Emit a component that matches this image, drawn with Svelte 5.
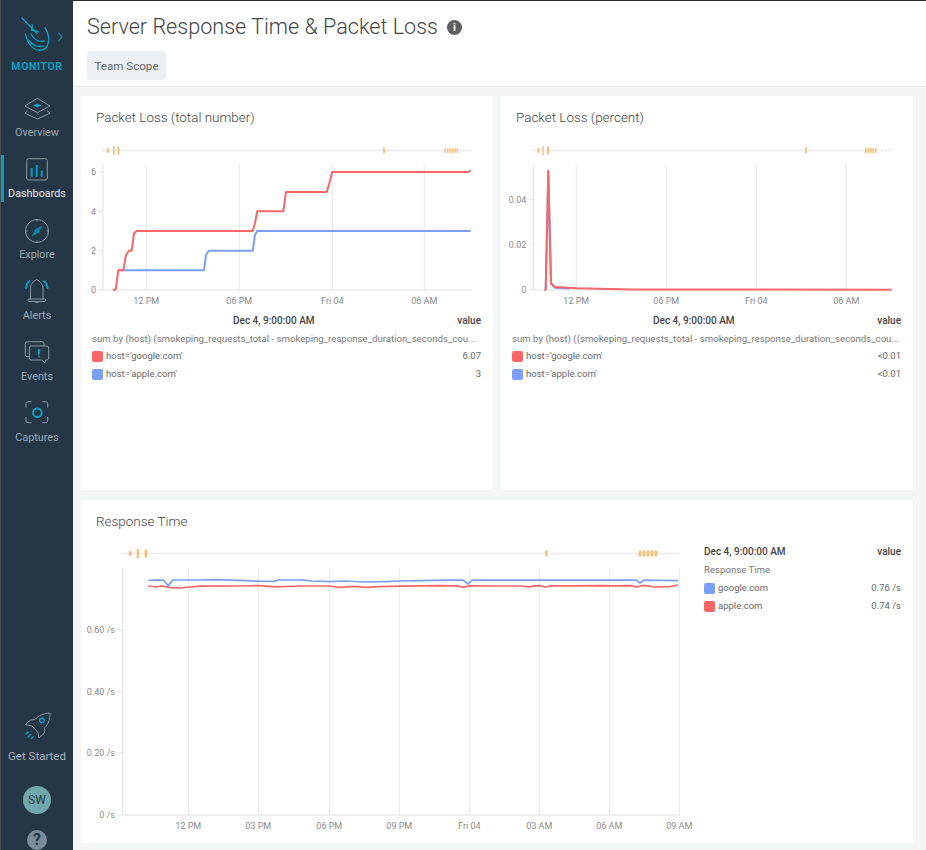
<script>
	// plot geometry is read off the screen, so series are in page px and shifted by the group transform
	const RED = '#f76767';
	const BLUE = '#7a9ff5';

	const navItems = ['Overview', 'Dashboards', 'Explore', 'Alerts', 'Events', 'Captures'];

	const toPoints = (pts) => pts.map(([x, y]) => `${x},${y}`).join(' ');

	const ticks = (spans) => spans.map(([x, w, h]) => ({ x, w, h }));

	const lossRed = [[113,289.7],[115.7,289.7],[118.3,270.3],[123.3,270.3],[126,255],[129,250.7],[131.7,250.7],[134,233.3],[136.7,231],[252.7,231],[255,223.3],[257.3,211.3],[283.3,211.3],[286,192],[326.7,192],[329.3,183.3],[332.3,172],[468.3,172],[470.7,170.7]];
	const lossBlue = [[118.3,270.3],[204,270.3],[206,255],[208.7,250.7],[252.7,250.7],[255,235],[257.3,231],[470.7,231]];
	const pctRed = [[544.3,289.7],[545.7,289.7],[548.3,171.5],[551,283.3],[555,287],[576.7,288.3],[633,289.4],[891.7,289.7]];
	// blue sits under the red, only its tip and the start of the tail show
	const pctBlue = [[545.7,289.7],[548.3,170.5],[551,283.3],[555,287.8],[570,288.6]];

	const rtBlue = [[148.3,580.3],[160,580],[164,580.4],[168.3,586],[172.7,580],[200,580],[216,579.6],[240,580.4],[258,581.2],[274,581.4],[278,580],[300,580],[302,579.8],[312,581],[330,581.6],[345,581],[365,582],[385,581.6],[400,581],[420,580.6],[445,580.2],[463,580.2],[468.3,584],[472,580.2],[520,580.2],[560,580.2],[600,580.2],[636,580],[640,583],[644,580.2],[678,580.6]];
	const rtRed = [[148.3,586],[156,587],[162,586],[170,587.6],[180,588],[190,587],[200,586.2],[240,586],[258,585.6],[277,586.8],[300,586],[329,586],[340,587.4],[355,586.4],[365,587.4],[380,586.6],[400,586.2],[440,585.6],[456,585.8],[463,587.2],[470,585.8],[500,586],[520,586],[530,586.8],[535,585.8],[540,585.6],[545,587],[552,585.8],[570,585.8],[600,585.6],[612,585.8],[632,585.6],[636,587],[644,585.4],[654,587],[670,586.6],[678,585]];

	const lossTicks = ticks([[107,2,5],[113,1.6,9],[117.5,2,8],[383,2,6],[444.5,1.4,5],[447,1.4,5],[449.5,1.4,5],[452,1.4,5],[454.5,1.4,5],[456.5,1.4,5]]);
	const pctTicks = ticks([[537.5,1.6,5],[542.5,1.4,9],[547,2.2,8],[805,1.8,6],[865,1.6,5],[867.5,1.6,5],[870,1.6,5],[872.5,1.6,5],[875,1.6,5]]);
	const rtTicks = ticks([[129,2.6,5],[136.7,2.6,9],[144.7,2.6,8],[545.3,2.6,6],[638.7,2.8,6],[642.6,2.8,6],[646.5,2.8,6],[650.4,2.8,6],[654.5,2.8,6]]);

	const smallCharts = [
		{
			id: 'loss',
			title: 'Packet Loss (total number)',
			dx: 81,
			left: 103,
			right: 472,
			ticks: lossTicks,
			grid: [[146.3, '12 PM'], [239.3, '06 PM'], [332.3, 'Fri 04'], [424.3, '06 AM']],
			yLabels: [[289.7, '0'], [250.7, '2'], [211.3, '4'], [172, '6']],
			series: [[lossBlue, BLUE], [lossRed, RED]],
			query: 'sum by (host) (smokeping_requests_total - smokeping_response_duration_seconds_cou...',
			rows: [["host='google.com'", RED, '6.07'], ["host='apple.com'", BLUE, '3']]
		},
		{
			id: 'pct',
			title: 'Packet Loss (percent)',
			dx: 501,
			left: 533.3,
			right: 892,
			ticks: pctTicks,
			grid: [[576.3, '12 PM'], [666.3, '06 PM'], [756.3, 'Fri 04'], [846.3, '06 AM']],
			yLabels: [[289.7, '0'], [244.3, '0.02'], [199.3, '0.04']],
			series: [[pctBlue, BLUE], [pctRed, RED]],
			query: 'sum by (host) ((smokeping_requests_total - smokeping_response_duration_seconds_cou...',
			rows: [["host='google.com'", RED, '<0.01'], ["host='apple.com'", BLUE, '<0.01']]
		}
	];

	const rtGrid = [[188.3, '12 PM'], [258.3, '03 PM'], [329.3, '06 PM'], [399.3, '09 PM'], [469.3, 'Fri 04'], [539.3, '03 AM'], [609.3, '06 AM'], [679.3, '09 AM']];
	const rtY = [[815, '0 /s'], [753, '0.20 /s'], [692, '0.40 /s'], [630, '0.60 /s']];
</script>

<div class="page">
	<aside class="sidebar">
		<div class="logo">
			<svg width="72" height="60" viewBox="0 0 72 60" fill="none" stroke="#0a9fc0" stroke-width="1.4" stroke-linecap="round" stroke-linejoin="round">
				<path d="M21 18 L36 33.5" />
				<path d="M31.5 25 L30.5 30 L37 31.5" />
				<path d="M44 28 C48 33 49 41 46 46.5 C43 51 37 51 33 48.500 C28.500 45.500 25.500 40 24.500 34" />
				<path d="M27.500 40 C31 45 37 47.500 42 46" />
				<path d="M30 34 C33 39.500 38 42.500 43 41" />
				<path d="M57.5 33 L61 37 L57.5 41" stroke="#157c98" />
			</svg>
			<span class="logo-text">MONITOR</span>
		</div>
		<nav class="nav">
			{#each navItems as item}
				<div class="nav-item" class:active={item === 'Dashboards'}>
					<svg width="36" height="36" viewBox="0 0 36 36" fill="none" stroke="#8b98a3" stroke-width="1" stroke-linejoin="round">
						{#if item === 'Overview'}
							<path d="M18.3 7.3 L31 15 L18.3 21.7 L6 15 Z" />
							<path d="M8.5 19.7 L6 22.3 L18.3 28 L31 22.3 L28 19.7" />
							<path d="M18.3 12.5 L22.3 14.5 L18.3 16.5 L14.3 14.5 Z" fill="#0a9fc0" stroke="none" />
						{:else if item === 'Dashboards'}
							<rect x="7.7" y="6.7" width="20.6" height="21.3" rx="2" />
							<path d="M12.7 24.7 V16 M17.7 24.7 V13 M22.7 24.7 V18.7" stroke="#0a9fc0" stroke-width="2" />
						{:else if item === 'Explore'}
							<circle cx="18" cy="18" r="11.5" />
							<path d="M18 6.5 V8.5 M18 27.5 V29.5 M6.5 18 H8.5 M27.5 18 H29.5" />
							<path d="M23.5 12.5 L19.8 19.8 L12.5 23.5 L16.2 16.2 Z" fill="#0a86a6" stroke="none" />
						{:else if item === 'Alerts'}
							<path d="M11.5 25 V15 C11.5 10.5 14 7.5 17.7 5.5 C21.5 7.5 24 10.5 24 15 V25" />
							<rect x="9" y="25" width="17.5" height="2.5" rx="1" />
							<path d="M15.5 27.5 A2.5 2.5 0 0 0 20 27.5" />
							<path d="M7 14 C7.2 11 8.5 8.5 10.5 7 M28.5 14 C28.3 11 27 8.5 25 7" stroke="#0a9fc0" stroke-width="1.8" stroke-linecap="round" />
						{:else if item === 'Events'}
							<path d="M10 21.7 H8.3 Q6.3 21.7 6.3 19.7 V8.7 Q6.3 6.7 8.3 6.7 H23 Q25 6.7 25 8.7 V11" />
							<path d="M12.3 11 H27.7 Q29.7 11 29.7 13 V23 Q29.7 25 27.7 25 H26.5 L26 27.7 L22.5 25 H12.3 Q10.3 25 10.3 23 V13 Q10.3 11 12.3 11 Z" />
							<path d="M18.7 14.3 H21.3 L20.8 19.7 H19.2 Z M19.2 20.5 H20.8 V22.2 H19.2 Z" fill="#0a9fc0" stroke="none" />
						{:else if item === 'Captures'}
							<path d="M7 11.5 V7.7 Q7 5.7 9 5.7 H12.5 M23.2 5.7 H26.7 Q28.7 5.7 28.7 7.7 V11.5 M28.7 21 V24.7 Q28.7 26.7 26.7 26.7 H23.2 M12.5 26.7 H9 Q7 26.7 7 24.7 V21" />
							<circle cx="18.3" cy="16.7" r="4.3" stroke="#0a9fc0" stroke-width="2" />
						{/if}
					</svg>
					<span>{item}</span>
				</div>
			{/each}
		</nav>
		<div class="side-bottom">
			<div class="nav-item started">
				<svg width="36" height="36" viewBox="0 0 36 36" fill="none" stroke="#8b98a3" stroke-width="1" stroke-linejoin="round">
					<path d="M31 5 C24 5.5 19.5 7.5 16 11.5 L11.5 12 L6.5 16.5 L13 18 L19 24.5 L20 30 L25 25.5 C26 23 26 21.5 25.5 20 C29.5 16 31 11 31 5 Z" />
					<circle cx="23" cy="12.5" r="2.3" stroke="#0a9fc0" stroke-width="1.3" />
					<path d="M9.5 23.5 L6.5 26.5 M12 26 L8.5 29.5 M14.5 28.5 L12 31" stroke="#0a9fc0" stroke-width="1.3" />
				</svg>
				<span>Get Started</span>
			</div>
			<div class="avatar">SW</div>
			<div class="help">?</div>
		</div>
	</aside>

	<main class="main">
		<header class="header">
			<div class="title-row">
				<h1>Server Response Time &amp; Packet Loss</h1>
				<span class="info">i</span>
			</div>
			<button class="scope">Team Scope</button>
		</header>

		<div class="cards">
			{#each smallCharts as c}
				<section class="card">
					<h2>{c.title}</h2>
					<svg class="plot" width="412" height="178" viewBox="0 0 412 178">
						<g transform="translate({-c.dx} -142)">
							<line x1={c.left - 1} x2={c.right} y1="150.5" y2="150.5" class="anno-line" />
							{#each c.ticks as t}
								<rect x={t.x} width={t.w} y={150.5 - t.h / 2} height={t.h} fill="#fbbf7c" />
							{/each}
							{#each c.grid as [x, label]}
								<line x1={x} x2={x} y1="164" y2="290" class="grid" />
								<text x={x} y="304" text-anchor="middle" class="tick">{label}</text>
							{/each}
							<line x1={c.left} x2={c.left} y1="165" y2="290" class="axis" />
							<line x1={c.left} x2={c.right} y1="290" y2="290" class="axis" />
							{#each c.yLabels as [y, label]}
								<line x1={c.left - 4} x2={c.left} y1={y} y2={y} class="axis" />
								<text x={c.left - 7} y={y + 3.2} text-anchor="end" class="tick">{label}</text>
							{/each}
							{#each c.series as [pts, color]}
								<polyline points={toPoints(pts)} stroke={color} class="line" />
							{/each}
						</g>
					</svg>
					<div class="legend small">
						<div class="legend-head">
							<span class="stamp">Dec 4, 9:00:00 AM</span>
							<b>value</b>
						</div>
						<div class="query">{c.query}</div>
						{#each c.rows as [name, color, value]}
							<div class="row">
								<span class="swatch" style="background: {color}"></span>
								<span class="name">{name}</span>
								<span class="val">{value}</span>
							</div>
						{/each}
					</div>
				</section>
			{/each}

			<section class="card wide">
				<h2>Response Time</h2>
				<div class="wide-body">
					<svg class="plot" width="622" height="295" viewBox="0 0 622 295">
						<g transform="translate(-81 -545)">
							<line x1="122" x2="680" y1="553.5" y2="553.5" class="anno-line" />
							{#each rtTicks as t}
								<rect x={t.x} width={t.w} y={553.5 - t.h / 2} height={t.h} fill="#fbbf7c" />
							{/each}
							{#each rtGrid as [x, label]}
								<line x1={x} x2={x} y1="568" y2="815" class="grid" />
								<text x={x} y="829" text-anchor="middle" class="tick">{label}</text>
							{/each}
							<line x1="122.7" x2="122.7" y1="568" y2="815" class="axis" />
							<line x1="122.7" x2="680" y1="815" y2="815" class="axis" />
							{#each rtY as [y, label]}
								<line x1="118" x2="122.7" y1={y} y2={y} class="axis" />
								<text x="115" y={y + 3.2} text-anchor="end" class="tick">{label}</text>
							{/each}
							<polyline points={toPoints(rtRed)} stroke={RED} class="line thin" />
							<polyline points={toPoints(rtBlue)} stroke={BLUE} class="line thin" />
						</g>
					</svg>
					<div class="legend side">
						<div class="legend-head">
							<b>Dec 4, 9:00:00 AM</b>
							<b>value</b>
						</div>
						<div class="query">Response Time</div>
						<div class="row">
							<span class="swatch" style="background: {BLUE}"></span>
							<span class="name">google.com</span>
							<span class="val">0.76 /s</span>
						</div>
						<div class="row">
							<span class="swatch" style="background: {RED}"></span>
							<span class="name">apple.com</span>
							<span class="val">0.74 /s</span>
						</div>
					</div>
				</div>
			</section>
		</div>
	</main>
</div>

<style>
	:global(body) {
		margin: 0;
		overflow: hidden;
	}

	.page {
		display: flex;
		width: 926px;
		height: 850px;
		overflow: hidden;
		background: #f4f5f5;
		font-family: Roboto, 'Liberation Sans', sans-serif;
		color: #555;
	}

	/* sidebar */
	.sidebar {
		width: 72px;
		flex-shrink: 0;
		display: flex;
		flex-direction: column;
		background: #253746;
		border-left: 1px solid #4a4a4a;
		box-sizing: content-box;
	}

	.logo {
		height: 88px;
		display: flex;
		flex-direction: column;
		align-items: center;
	}

	.logo svg {
		display: block;
	}

	.logo-text {
		margin-top: 1px;
		font-size: 10.5px;
		line-height: 12px;
		font-weight: 700;
		letter-spacing: 0.6px;
		color: #0a9fc0;
	}

	.nav {
		display: flex;
		flex-direction: column;
		gap: 14px;
		margin-top: 3px;
	}

	.nav-item {
		position: relative;
		height: 47px;
		display: flex;
		flex-direction: column;
		align-items: center;
		font-size: 10.8px;
		line-height: 14px;
		color: #9aa7b1;
	}

	.nav-item svg {
		display: block;
		flex-shrink: 0;
	}

	.nav-item span {
		margin-top: -1px;
		white-space: nowrap;
	}

	.nav-item.active {
		color: #e6eaed;
	}

	.nav-item.active::before {
		content: '';
		position: absolute;
		left: 0;
		top: 3px;
		bottom: -3px;
		width: 3px;
		background: #0a9fc0;
	}

	.side-bottom {
		margin-top: auto;
		display: flex;
		flex-direction: column;
		align-items: center;
	}

	.nav-item.started {
		height: 54px;
		margin-bottom: 24px;
		font-size: 11.5px;
		color: #a9b4bd;
	}

	.nav-item.started span {
		margin-top: 5px;
	}

	.avatar {
		width: 28px;
		height: 28px;
		border-radius: 50%;
		background: #6fa8ad;
		color: #253746;
		font-size: 12px;
		line-height: 28px;
		text-align: center;
	}

	.help {
		width: 20px;
		height: 20px;
		margin-top: 16px;
		border-radius: 50%;
		background: #7b8b99;
		color: #253746;
		font-size: 16px;
		font-weight: 700;
		line-height: 20px;
		text-align: center;
	}

	/* main */
	.main {
		flex: 1;
		min-width: 0;
		display: flex;
		flex-direction: column;
	}

	.header {
		height: 87px;
		box-sizing: border-box;
		padding: 13px 14px 0;
		background: #fff;
		border-top: 1px solid #2c2c2c;
		border-bottom: 1px solid #e8e8e8;
	}

	.title-row {
		display: flex;
		align-items: center;
		gap: 9px;
	}

	h1 {
		margin: 0;
		font-size: 21.6px;
		line-height: 26px;
		font-weight: 300;
		color: #444;
	}

	.info {
		width: 15px;
		height: 15px;
		border-radius: 50%;
		background: #5f5f5f;
		color: #fff;
		font-size: 11px;
		font-weight: 700;
		line-height: 15px;
		text-align: center;
	}

	.scope {
		display: block;
		margin-top: 11px;
		height: 29px;
		width: 79px;
		padding: 0;
		border: 0;
		border-radius: 3px;
		background: #ecf0f3;
		color: #666;
		font: 400 11.6px Roboto, sans-serif;
	}

	.cards {
		display: grid;
		grid-template-columns: 412px 412px;
		grid-template-rows: 394px 343px;
		gap: 10px 8px;
		margin: 9px 0 0 8px;
	}

	.card {
		background: #fff;
		min-width: 0;
	}

	.card.wide {
		grid-column: 1 / 3;
	}

	h2 {
		margin: 0;
		padding: 14px 15px 0;
		height: 32px;
		box-sizing: border-box;
		font-size: 13.45px;
		line-height: 16px;
		font-weight: 300;
		color: #444;
	}

	.plot {
		display: block;
		margin-top: 14px;
	}

	.wide .plot {
		margin-top: 13px;
	}

	.anno-line {
		stroke: #e6e6e6;
		stroke-width: 1.5;
		stroke-dasharray: 3 1;
	}

	.grid {
		stroke: #e8e8e8;
		stroke-width: 1;
	}

	.axis {
		stroke: #e0e0e0;
		stroke-width: 1;
	}

	.tick {
		font-size: 9px;
		fill: #8a8a8a;
	}

	.line {
		fill: none;
		stroke-width: 2;
		stroke-linejoin: round;
	}

	.line.thin {
		stroke-width: 1.7;
	}

	.legend {
		font-size: 9.5px;
		color: #666;
	}

	.legend.small {
		margin-top: -6px;
		padding: 0 12px 0 11px;
	}

	.legend-head {
		display: flex;
		justify-content: space-between;
		height: 14px;
		font-size: 10px;
		line-height: 14px;
		color: #444;
	}

	.legend-head b,
	.stamp {
		font-weight: 500;
	}

	.legend.small .stamp {
		margin-left: 141px;
	}

	.query {
		margin-top: 4px;
		height: 14px;
		font-size: 9.65px;
		line-height: 14px;
		color: #777;
		white-space: nowrap;
	}

	.row {
		display: flex;
		align-items: center;
		height: 18px;
		line-height: 14px;
	}

	.query + .row {
		margin-top: 1px;
	}

	.side .query + .row {
		margin-top: 2px;
	}

	.swatch {
		width: 11px;
		height: 11px;
		border-radius: 2px;
		margin-right: 3px;
		flex-shrink: 0;
	}

	.name {
		flex: 1;
	}

	.wide-body {
		display: flex;
	}

	.legend.side {
		width: 197px;
		margin-top: 13px;
		margin-left: 1px;
	}
</style>
